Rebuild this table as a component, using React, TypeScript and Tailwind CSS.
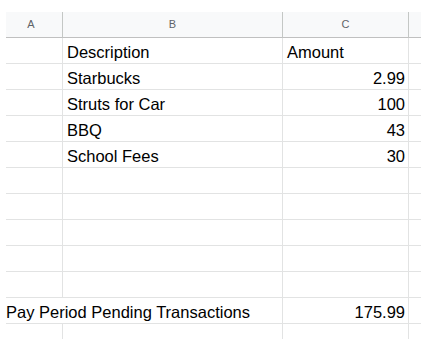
import React from "react";

type Row = { desc?: string; amount?: string; header?: boolean; merged?: boolean };

const rows: Row[] = [
  { desc: "Description", amount: "Amount", header: true },
  { desc: "Starbucks", amount: "2.99" },
  { desc: "Struts for Car", amount: "100" },
  { desc: "BBQ", amount: "43" },
  { desc: "School Fees", amount: "30" },
  {},
  {},
  {},
  {},
  {},
  { desc: "Pay Period Pending Transactions", amount: "175.99", merged: true },
];

const cell = "h-[26px] border-b border-r border-[#e2e3e3] flex items-end pb-[2px] leading-[18px]";

export default function App() {
  return (
    <div className="w-[439px] h-[343px] bg-white pt-[12px] pl-[6px] font-['Liberation_Sans',Arial,sans-serif] text-[16.5px] text-black">
      <div className="grid grid-cols-[57px_220px_126px_12px] w-[415px]">
        {/* column headers */}
        <div className="h-[26px] bg-[#f8f9fa] border-b border-r border-b-[#c0c0c0] border-r-[#c4c7c5] flex items-center justify-center pr-[6px] text-[11px] text-[#5f6368]">
          A
        </div>
        <div className="h-[26px] bg-[#f8f9fa] border-b border-r border-b-[#c0c0c0] border-r-[#c4c7c5] flex items-center justify-center text-[11px] text-[#5f6368]">
          B
        </div>
        <div className="h-[26px] bg-[#f8f9fa] border-b border-r border-b-[#c0c0c0] border-r-[#c4c7c5] flex items-center justify-center text-[11px] text-[#5f6368]">
          C
        </div>
        <div className="h-[26px] bg-[#f8f9fa] border-b border-b-[#c0c0c0]" />

        {rows.map((r, i) =>
          r.merged ? (
            <React.Fragment key={i}>
              <div className={`${cell} col-span-2 whitespace-nowrap`}>{r.desc}</div>
              <div className={`${cell} justify-end pr-[3px]`}>{r.amount}</div>
              <div className="h-[26px] border-b border-[#e2e3e3]" />
            </React.Fragment>
          ) : (
            <React.Fragment key={i}>
              <div className={cell} />
              <div className={`${cell} pl-[4px] whitespace-nowrap`}>{r.desc}</div>
              <div className={`${cell} ${r.header ? "pl-[4px]" : "justify-end pr-[3px]"}`}>{r.amount}</div>
              <div className="h-[26px] border-b border-[#e2e3e3]" />
            </React.Fragment>
          )
        )}

        {/* partial last row */}
        <div className="h-[15px] border-r border-[#e2e3e3]" />
        <div className="h-[15px] border-r border-[#e2e3e3]" />
        <div className="h-[15px] border-r border-[#e2e3e3]" />
        <div className="h-[15px]" />
      </div>
    </div>
  );
}
